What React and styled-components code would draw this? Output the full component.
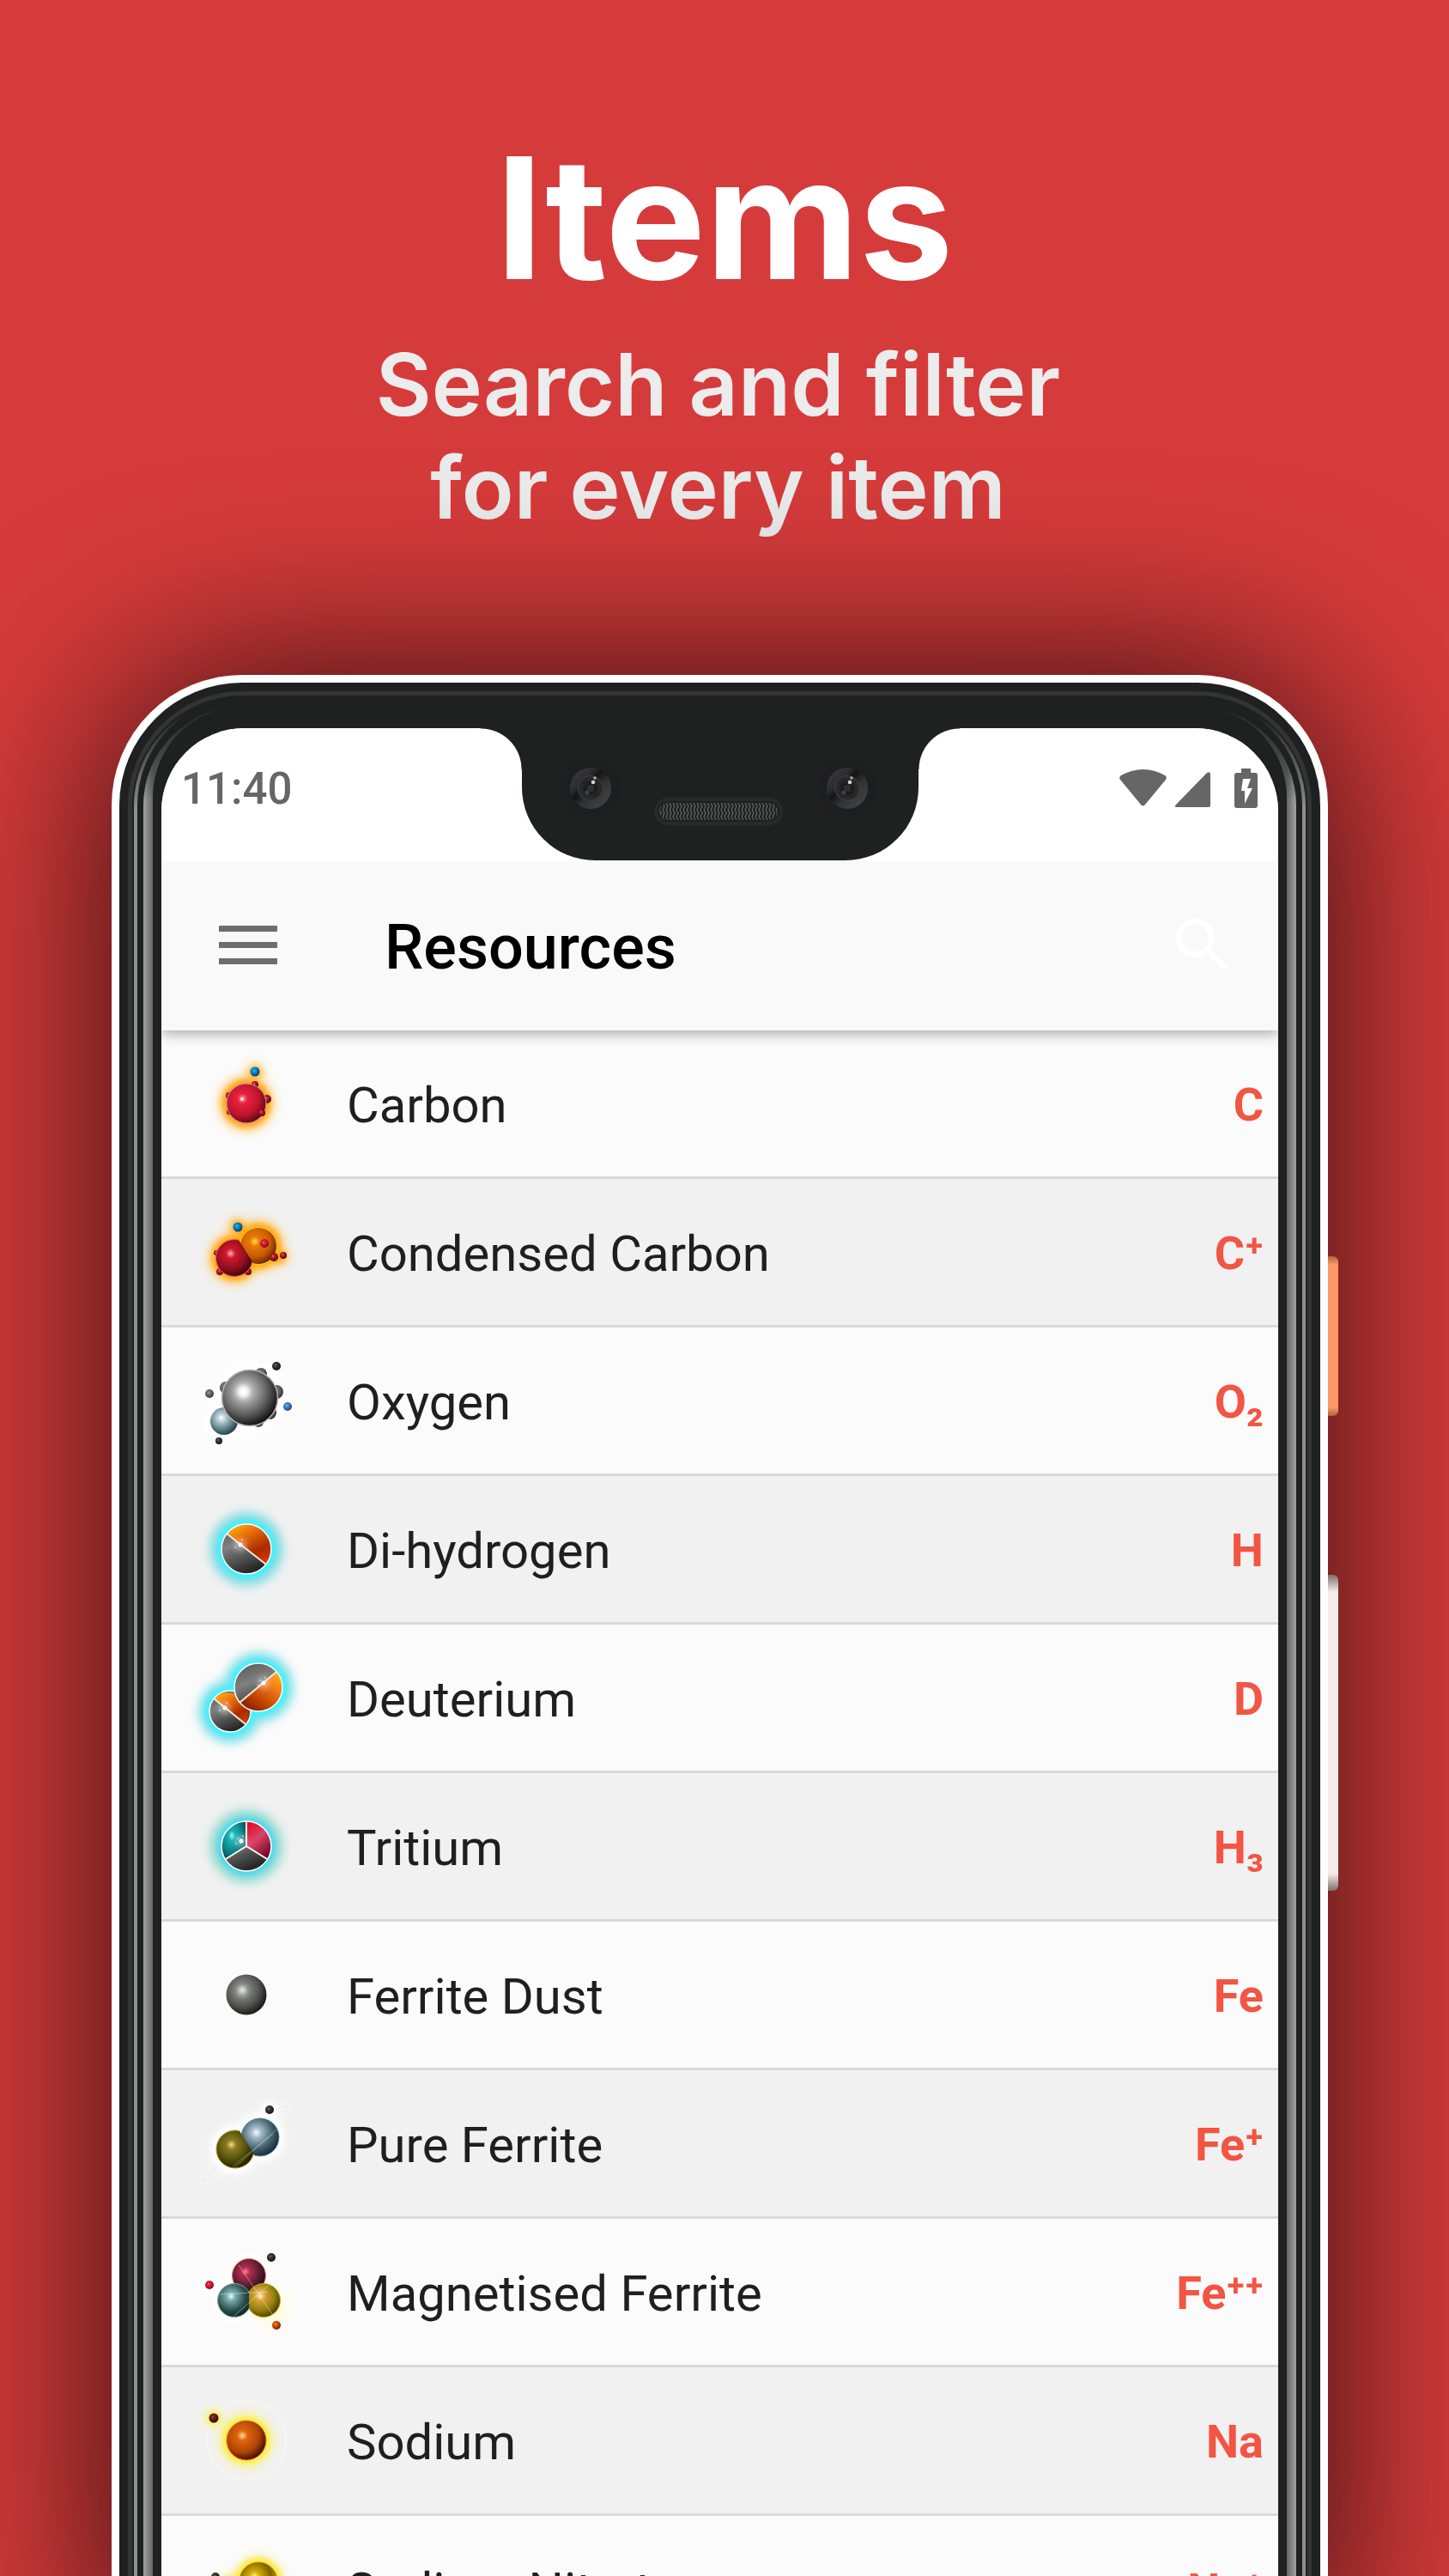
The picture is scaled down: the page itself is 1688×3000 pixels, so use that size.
import React from "react";
import styled, { createGlobalStyle } from "styled-components";

const GlobalStyle = createGlobalStyle`
  *, *::before, *::after { box-sizing: border-box; }
  body { margin: 0; background: #d63b3b; }
`;

const Page = styled.main`
  height: 100vh;
  overflow: hidden;
  background: #d63b3b;
  font-family: Roboto, "Noto Sans", sans-serif;
`;

const Title = styled.h1`
  margin: 0;
  padding-top: 134px;
  color: #fff;
  font: 700 196px/240px Inter, sans-serif;
  text-align: center;
`;

const Column = styled.div`
  margin: 0 141px 0 130px;
`;

const Subtitle = styled.p`
  margin: 0;
  padding: 14px 4px 158px 0;
  color: #ececec;
  font: 600 100px/120px Inter, sans-serif;
  text-align: center;
`;

const Phone = styled.section`
  position: relative;
  padding: 9px 9px 0;
  border-radius: 152px 152px 0 0;
  background: #fff;
  box-shadow: 0 0 220px rgba(0, 0, 0, 0.8);
`;

const SideKey = styled.span`
  position: absolute;
  left: 100%;
  top: ${(p) => p.$top}px;
  width: 12px;
  height: ${(p) => p.$height}px;
  border-radius: 0 6px 6px 0;
  background: linear-gradient(
    ${(p) => p.$edge},
    ${(p) => p.$color} ${(p) => p.$fade}px calc(100% - ${(p) => p.$fade}px),
    ${(p) => p.$edge}
  );
`;

const Shell = styled.div`
  padding: 10px 10px 0;
  border-radius: 143px 143px 0 0;
  background: #1f2120;
`;

const Ring = styled.div`
  padding: 5px 5px 0;
  border-radius: 133px 133px 0 0;
  background: #343434;
`;

const Rim = styled.div`
  padding: 2px 2px 0;
  border-radius: 128px 128px 0 0;
  background: #1f2120;
`;

const Glint = styled.div`
  padding: 0 4px;
  border-radius: 126px 126px 0 0;
  background: linear-gradient(#1f2120 20px, #8f8f8f 130px);
`;

const Band = styled.div`
  padding: 11px 7px 0;
  border-radius: 126px 126px 0 0;
  background: #1f2120;
`;

const Chrome = styled.div`
  padding: 0 11px;
  border-radius: 115px 115px 0 0;
  background:
    linear-gradient(#2e2e30 20px, transparent 110px),
    linear-gradient(90deg, #a2a2a2, #666 11px, #666 calc(100% - 11px), #a2a2a2);
`;

const Bezel = styled.div`
  padding: 25px 10px 0;
  border-radius: 105px 105px 0 0;
  background: #1f2120;
`;

const Screen = styled.div`
  overflow: hidden;
  border-radius: 97px 97px 0 0;
  background: #fff;
`;

const StatusBar = styled.div`
  position: relative;
  z-index: 1;
  display: grid;
  grid-template-columns: 1fr 462px 1fr;
  height: 155px;
  background: #fff;
  color: #666;
`;

const StatusSide = styled.div`
  display: flex;
  align-items: center;
  justify-content: ${(p) => (p.$end ? "flex-end" : "flex-start")};
  padding: 0 23px 13px;
`;

const Clock = styled.time`
  font-size: 51px;
  line-height: 60px;
  font-weight: 500;
`;

const Notch = styled.div`
  position: relative;
  display: flex;
  align-items: center;
  justify-content: space-between;
  height: 154px;
  padding: 0 49px 14px 46px;
  border-radius: 0 0 85px 85px;
  background: #1f2120;
  &::before, &::after {
    content: "";
    position: absolute;
    top: 0;
    width: 48px;
    height: 48px;
  }
  &::before {
    right: 100%;
    background: radial-gradient(circle at 0 100%, transparent 47px, #1f2120 48px);
  }
  &::after {
    left: 100%;
    background: radial-gradient(circle at 100% 100%, transparent 47px, #1f2120 48px);
  }
`;

const Speaker = styled.div`
  width: 150px;
  height: 32px;
  margin-top: 54px;
  padding: 6px;
  border-radius: 16px;
  background: #2a2a2a;
`;

const Toolbar = styled.header`
  position: relative;
  display: flex;
  align-items: center;
  height: 197px;
  padding: 0 46px 2px 67px;
  background: #f9f9f9;
  box-shadow: 0 2px 16px rgba(0, 0, 0, 0.4);
`;

const IconButton = styled.button`
  display: flex;
  padding: 0;
  border: 0;
  background: none;
`;

const ScreenTitle = styled.h2`
  flex: 1;
  margin: 0 0 0 125px;
  padding-top: 6px;
  color: #000;
  font-size: 72px;
  line-height: 84px;
  font-weight: 500;
`;

const List = styled.ul`
  margin: 0;
  padding: 0;
  list-style: none;
`;

const Row = styled.li`
  display: flex;
  align-items: center;
  height: 173px;
  padding: 4px 17px 0 36px;
  border-bottom: 3px solid #d9d9d9;
  background: #fbfbfb;
  &:nth-child(even) { background: #f1f1f1; }
`;

const Name = styled.span`
  flex: 1;
  margin-left: 54px;
  color: #1f1f1f;
  font-size: 58px;
  line-height: 68px;
`;

const Symbol = styled.span`
  color: #f25543;
  font-size: 54px;
  line-height: 64px;
  font-weight: 700;
`;

const Art = styled.svg`
  display: block;
  flex: none;
  overflow: visible;
`;

const Definitions = styled(Art)`
  position: absolute;
`;

const palette = {
  red: ["#ff9aa8", "#e8203f", "#c0142c", "#5a0814"],
  deepRed: ["#ffb0b8", "#d0182c", "#8c1020", "#38040a"],
  amber: ["#ffe040", "#e87c08", "#c85a00", "#602400"],
  blue: ["#40d8ff", "#0c98e0", "#0468a8", "#02304c"],
  softBlue: ["#9cc8f4", "#5090d0", "#3068a8", "#204060"],
  steel: ["#ffffff", "#b8b8b8", "#5c5c5c", "#0c0c0c"],
  stone: ["#d8dcd8", "#848884", "#505250", "#141614"],
  grey: ["#b0b0b0", "#787878", "#585858", "#2c2c2c"],
  dark: ["#888888", "#404040", "#262626", "#0a0a0a"],
  orange: ["#ffb040", "#e86404", "#b43400", "#601400"],
  glass: ["#ffffff", "#c0d4da", "#5c808a", "#203c46"],
  sky: ["#f4fcff", "#a4bcc8", "#42606e", "#142c34"],
  olive: ["#ffd880", "#8c7c20", "#4c4c08", "#1c1c00"],
  crimson: ["#ff7890", "#b42c50", "#581c34", "#280818"],
  teal: ["#e8ffff", "#7cacac", "#2c5050", "#0c2424"],
  gold: ["#ffe8a0", "#d8a030", "#948010", "#503800"],
  rust: ["#ffe090", "#e06410", "#b04408", "#3c0c00"],
  maroon: ["#b06040", "#782818", "#501408", "#280400"],
  sun: ["#fff8b0", "#d8b000", "#806000", "#c8a000"],
  cyan: ["#a0ffff", "#18b4b8", "#0c8488", "#084c50"],
};

const Gradients = () => (
  <Definitions width="0" height="0" aria-hidden="true">
    <defs>
      {Object.entries(palette).map(([name, c]) => (
        <radialGradient key={name} id={name} cx="0.4" cy="0.38" r="0.65">
          <stop offset="0" stopColor={c[0]} />
          <stop offset="0.2" stopColor={c[1]} />
          <stop offset="0.65" stopColor={c[2]} />
          <stop offset="1" stopColor={c[3]} />
        </radialGradient>
      ))}
      <linearGradient id="ember" x1="0.2" y1="0" x2="0.8" y2="1">
        <stop offset="0" stopColor="#ffb010" />
        <stop offset="0.3" stopColor="#e86c08" />
        <stop offset="0.7" stopColor="#a82c00" />
        <stop offset="1" stopColor="#e03800" />
      </linearGradient>
      <linearGradient id="emberLow" x1="1" y1="0" x2="0.2" y2="1">
        <stop offset="0" stopColor="#ffc010" />
        <stop offset="0.35" stopColor="#f07818" />
        <stop offset="0.7" stopColor="#c04400" />
        <stop offset="1" stopColor="#801800" />
      </linearGradient>
      <linearGradient id="ash" x1="0" y1="0" x2="0.4" y2="1">
        <stop offset="0" stopColor="#545454" />
        <stop offset="0.45" stopColor="#808080" />
        <stop offset="1" stopColor="#282828" />
      </linearGradient>
      <linearGradient id="ruby" x1="0.2" y1="0" x2="0.8" y2="1">
        <stop offset="0" stopColor="#e80828" />
        <stop offset="0.45" stopColor="#d84468" />
        <stop offset="1" stopColor="#700020" />
      </linearGradient>
      <linearGradient id="lens" x1="0" y1="0" x2="1" y2="1">
        <stop offset="0" stopColor="#3c3c3e" />
        <stop offset="0.3" stopColor="#2e2e30" />
        <stop offset="0.42" stopColor="#141414" />
        <stop offset="0.6" stopColor="#323234" />
        <stop offset="0.85" stopColor="#404042" />
        <stop offset="0.93" stopColor="#6c6c6c" />
        <stop offset="1" stopColor="#303030" />
      </linearGradient>
      <filter id="blur" x="-60%" y="-60%" width="220%" height="220%"><feGaussianBlur stdDeviation="6" /></filter>
      <filter id="tight" x="-60%" y="-60%" width="220%" height="220%"><feGaussianBlur stdDeviation="3" /></filter>
    </defs>
  </Definitions>
);

const Ball = ({ x, y, r, c, ...rest }) => <circle cx={x} cy={y} r={r} fill={`url(#${c})`} {...rest} />;

const Halo = ({ color, inner = color, spots, spread = 10 }) => (
  <>
    <g filter="url(#blur)" fill={color}>
      {spots.map(([x, y, r]) => <circle key={`${x}-${y}`} cx={x} cy={y} r={r + spread} />)}
    </g>
    <g filter="url(#tight)" fill={inner}>
      {spots.map(([x, y, r]) => <circle key={`${x}-${y}`} cx={x} cy={y} r={r + 4} />)}
    </g>
  </>
);

const Icon = ({ children }) => (
  <Art width="126" height="126" viewBox="0 0 126 126" aria-hidden="true">{children}</Art>
);

const Carbon = () => (
  <Icon>
    <Halo color="#ffd488" inner="#ffa010" spread={9} spots={[[63, 61, 24], [73, 25, 2]]} />
    <Ball x={73} y={39} r={4} c="deepRed" /><Ball x={87} y={56} r={5} c="deepRed" />
    <Ball x={43} y={52} r={4} c="deepRed" /><Ball x={43} y={71} r={3} c="deepRed" />
    <Ball x={63} y={61} r={23} c="red" stroke="#b898c0" strokeWidth="1" />
    <Ball x={81} y={72} r={4} c="deepRed" />
    <circle cx="58" cy="56" r="2" fill="#fff" opacity=".8" />
    <Ball x={73} y={24} r={5.5} c="blue" />
  </Icon>
);

const CondensedCarbon = () => (
  <Icon>
    <clipPath id="cc"><path d="M0 0H39V23L86 98V126H0Z" /></clipPath>
    <Halo color="#ffcc70" inner="#ffa810" spread={8} spots={[[49, 68, 22], [77, 54, 22], [53, 32, 3], [100, 66, 4]]} />
    <Ball x={28} y={62} r={3} c="deepRed" /><Ball x={32} y={84} r={4} c="deepRed" />
    <Ball x={65} y={84} r={4} c="deepRed" />
    <Ball x={77} y={54} r={21.5} c="amber" stroke="#ffd020" strokeWidth="1" />
    <Ball x={49} y={68} r={21.5} c="deepRed" stroke="#ff5060" strokeWidth="1" clipPath="url(#cc)" />
    <Ball x={84} y={51} r={5} c="red" /><Ball x={95} y={67} r={5} c="deepRed" />
    <Ball x={106} y={65} r={4} c="deepRed" /><Ball x={53} y={32} r={5.5} c="blue" />
  </Icon>
);

const Oxygen = () => (
  <Icon>
    <Halo color="#fff" spots={[[67, 58, 34], [37, 85, 15]]} />
    <Ball x={37} y={85} r={16} c="glass" />
    <Ball x={80} y={30} r={7} c="grey" /><Ball x={98} y={51} r={8} c="grey" />
    <Ball x={39} y={46} r={7} c="grey" /><Ball x={90} y={75} r={8} c="grey" />
    <Ball x={77} y={86} r={6} c="grey" />
    <Ball x={67} y={58} r={32.5} c="steel" stroke="#b4b4b4" strokeWidth="1.5" />
    <circle cx="59" cy="51" r="7" fill="#fff" filter="url(#tight)" />
    <Ball x={98} y={21} r={5} c="dark" /><Ball x={20} y={53} r={5} c="grey" />
    <Ball x={111} y={68} r={5} c="softBlue" /><Ball x={31} y={108} r={4} c="dark" />
  </Icon>
);

const Sparkle = ({ x, y }) => (
  <g fill="#fff">
    <circle cx={x} cy={y} r="7" opacity=".4" filter="url(#tight)" />
    <circle cx={x} cy={y} r="2.5" />
    <circle cx={x - 6} cy={y + 3} r="1" opacity=".6" /><circle cx={x + 2} cy={y - 6} r="1" opacity=".6" />
    <circle cx={x - 4} cy={y - 3} r="1" opacity=".6" />
  </g>
);

const DiHydrogen = () => (
  <Icon>
    <Halo color="#84dce2" inner="#38f4ff" spread={13} spots={[[63, 61, 30]]} />
    <circle cx="63" cy="61" r="29" fill="url(#ash)" />
    <path d="M40 43A29 29 0 0 1 86 79Z" fill="url(#ember)" />
    <path d="M40 43L86 79" stroke="#f8e8e0" strokeWidth="2" />
    <circle cx="63" cy="61" r="29" fill="none" stroke="#fff" strokeWidth="1.5" />
    <Sparkle x={56} y={56} />
  </Icon>
);

const Deuterium = () => (
  <Icon>
    <Halo color="#84e0e8" inner="#38f4ff" spread={12} spots={[[77, 49, 29], [44, 77, 25]]} />
    <circle cx="44" cy="77" r="24" fill="url(#ash)" />
    <path d="M25 62A24 24 0 0 1 62 92Z" fill="url(#ember)" />
    <path d="M25 62L62 92" stroke="#f8e8e0" strokeWidth="2" />
    <circle cx="44" cy="77" r="24" fill="none" stroke="#fff" strokeWidth="1.5" />
    <Sparkle x={38} y={73} />
    <circle cx="77" cy="49" r="28" fill="url(#ash)" />
    <path d="M98 31A28 28 0 0 1 55 67Z" fill="url(#emberLow)" />
    <path d="M98 31L55 67" stroke="#f8e8e0" strokeWidth="2" />
    <circle cx="77" cy="49" r="28" fill="none" stroke="#fff" strokeWidth="1.5" />
    <Sparkle x={83} y={44} />
  </Icon>
);

const Tritium = () => (
  <Icon>
    <Halo color="#94dcd0" inner="#48d8f0" spread={13} spots={[[63, 61, 30]]} />
    <circle cx="63" cy="61" r="29" fill="url(#ash)" />
    <path d="M63 61V32A29 29 0 0 0 39 76Z" fill="url(#cyan)" />
    <path d="M63 61V32A29 29 0 0 1 87 76Z" fill="url(#ruby)" />
    <path d="M63 32V61L39 76M63 61L87 76" fill="none" stroke="#fff" strokeWidth="2" />
    <circle cx="63" cy="61" r="29" fill="none" stroke="#fff" strokeWidth="1.5" />
    <Sparkle x={57} y={55} />
  </Icon>
);

const FerriteDust = () => (
  <Icon>
    <Ball x={63} y={61} r={23.5} c="stone" />
    <circle cx="58" cy="57" r="6" fill="#fff" opacity=".4" filter="url(#tight)" />
  </Icon>
);

const PureFerrite = () => (
  <Icon>
    <clipPath id="pf"><path d="M0 0H40V23L88 99V126H0Z" /></clipPath>
    <Halo color="#fafafa" inner="#fff" spread={6} spots={[[50, 68, 23], [79, 54, 23], [90, 22, 4]]} />
    <g fill="none" stroke="#fff" opacity=".7" transform="rotate(-41 62 61)">
      <ellipse cx="62" cy="61" rx="69" ry="13" /><ellipse cx="62" cy="61" rx="60" ry="9" />
    </g>
    <Ball x={79} y={54} r={22} c="sky" stroke="#4c88a0" strokeWidth="1" />
    <Ball x={50} y={68} r={22} c="olive" stroke="#c09020" strokeWidth="1" clipPath="url(#pf)" />
    <path d="M50 89L98 45M47 88L94 50" stroke="#fff" opacity=".35" />
    <Ball x={90} y={22} r={5} c="dark" />
  </Icon>
);

const MagnetisedFerrite = () => (
  <Icon>
    <clipPath id="mf"><path d="M0 0H66V126H0Z" /></clipPath>
    <circle cx="92" cy="80" r="22" fill="#ffffd0" opacity=".6" filter="url(#blur)" />
    <Halo color="#fff" spread={6} spots={[[66, 42, 19], [49, 71, 19], [20, 53, 4]]} />
    <Ball x={66} y={42} r={19.5} c="crimson" stroke="#e08850" strokeWidth="1" />
    <Ball x={83} y={71} r={19.5} c="gold" stroke="#c0b020" strokeWidth="1" />
    <Ball x={49} y={71} r={19.5} c="teal" stroke="#80b098" strokeWidth="1" clipPath="url(#mf)" />
    <path d="M54 30L94 88M32 64L88 61M48 90L88 54" stroke="#fff" opacity=".4" />
    <circle cx="79" cy="63" r="4" fill="#fff" opacity=".6" filter="url(#tight)" />
    <Ball x={92} y={21} r={5} c="dark" /><Ball x={20} y={53} r={5} c="red" />
    <Ball x={98} y={100} r={5} c="orange" />
  </Icon>
);

const Sodium = () => (
  <Icon>
    <circle cx="63" cy="61" r="46" fill="none" stroke="#f8f8ec" strokeWidth="1.5" />
    <Halo color="#f8f2b4" inner="#ffee40" spread={9} spots={[[63, 61, 24], [25, 35, 3]]} />
    <Ball x={63} y={61} r={23} c="rust" stroke="#f07010" strokeWidth="1" />
    <Ball x={25} y={35} r={5.5} c="maroon" />
  </Icon>
);

const SodiumNitrate = () => (
  <Icon>
    <Halo color="#f8f2b4" inner="#ffe830" spread={7} spots={[[77, 52, 23], [50, 72, 22]]} />
    <Ball x={50} y={72} r={22} c="rust" />
    <Ball x={77} y={52} r={22} c="sun" stroke="#b08c00" strokeWidth="1" />
    <Ball x={27} y={47} r={5} c="dark" />
  </Icon>
);

const resources = [
  ["Carbon", "C", Carbon],
  ["Condensed Carbon", "C⁺", CondensedCarbon],
  ["Oxygen", "O₂", Oxygen],
  ["Di-hydrogen", "H", DiHydrogen],
  ["Deuterium", "D", Deuterium],
  ["Tritium", "H₃", Tritium],
  ["Ferrite Dust", "Fe", FerriteDust],
  ["Pure Ferrite", "Fe⁺", PureFerrite],
  ["Magnetised Ferrite", "Fe⁺⁺", MagnetisedFerrite],
  ["Sodium", "Na", Sodium],
  ["Sodium Nitrate", "Na⁺", SodiumNitrate],
];

const Camera = () => (
  <Art width="68" height="68" viewBox="0 0 68 68" aria-hidden="true">
    <circle cx="34" cy="34" r="34" fill="#1b1f22" />
    <circle cx="34" cy="34" r="24" fill="url(#lens)" />
    <circle cx="34" cy="34" r="14.5" fill="#2e2e2f" stroke="#3c444c" strokeWidth="1" />
    <circle cx="34" cy="34" r="9" fill="#161616" filter="url(#tight)" />
    <circle cx="34" cy="34" r="4" fill="#303030" />
    <circle cx="39" cy="22" r="1.7" fill="#c0a4ac" />
    <circle cx="37" cy="27" r="2.3" fill="#c4d4dc" />
    <circle cx="30" cy="39" r="2.5" fill="#2c4a40" />
  </Art>
);

const Grille = () => (
  <Art width="138" height="20" viewBox="0 0 138 20" aria-hidden="true">
    <defs>
      <pattern id="mesh" width="4" height="8" patternUnits="userSpaceOnUse">
        <path d="M0 0L2 4L0 8M4 0L6 4L4 8" fill="none" stroke="#606060" strokeWidth="1.3" />
      </pattern>
    </defs>
    <rect x="-2" y="-2" width="142" height="24" rx="12" fill="#1f2120" />
    <rect width="138" height="20" rx="10" fill="url(#mesh)" />
  </Art>
);

const StatusIcons = () => (
  <Art width="162" height="48" viewBox="0 0 162 48" fill="#666" role="img" aria-label="Wi-Fi, signal, battery charging">
    <path d="M1 13Q-1 10 2 8Q28 -6 53 8Q56 10 54 13L30 42Q27.500 45 25 42Z" />
    <path d="M106 7V43Q106 45 104 45H67Q63 45 66 42L102 5Q106 3 106 7Z" />
    <path fillRule="evenodd" d="M142 0H153V5H158Q161 5 161 8V43Q161 46 158 46H137Q134 46 134 43V8Q134 5 137 5H142ZM144 12L142 26H146V41L155 23H149L153 12Z" />
  </Art>
);

export default function App() {
  return (
    <Page>
      <GlobalStyle />
      <Gradients />
      <Title>Items</Title>
      <Column>
        <Subtitle>Search and filter<br />for every item</Subtitle>
        <Phone>
          <SideKey $top={677} $height={186} $fade={10} $color="#ff9768" $edge="#b06038" />
          <SideKey $top={1048} $height={368} $fade={20} $color="#f5ebe9" $edge="#7c706c" />
          <Shell><Ring><Rim><Glint><Band><Chrome><Bezel>
            <Screen>
              <StatusBar>
                <StatusSide><Clock>11:40</Clock></StatusSide>
                <Notch><Camera /><Speaker><Grille /></Speaker><Camera /></Notch>
                <StatusSide $end><StatusIcons /></StatusSide>
              </StatusBar>
              <Toolbar>
                <IconButton aria-label="Menu">
                  <Art width="68" height="46" viewBox="0 0 68 46" fill="#6a6e72">
                    <path d="M0 0H68V7H0ZM0 19H68V26H0ZM0 38H68V45H0Z" />
                  </Art>
                </IconButton>
                <ScreenTitle>Resources</ScreenTitle>
                <IconButton aria-label="Search">
                  <Art width="84" height="84" viewBox="0 0 24 24" fill="#fff">
                    <path d="M15.500 14h-.79l-.28-.27A6.470 6.470 0 0 0 16 9.500 6.500 6.500 0 1 0 9.500 16c1.610 0 3.090-.59 4.230-1.570l.27.28v.79l5 4.990L20.490 19l-4.990-5zm-6 0C7.010 14 5 11.990 5 9.500S7.010 5 9.500 5 14 7.010 14 9.500 11.990 14 9.500 14z" />
                  </Art>
                </IconButton>
              </Toolbar>
              <List>
                {resources.map(([name, symbol, Picture]) => (
                  <Row key={name}>
                    <Picture />
                    <Name>{name}</Name>
                    <Symbol>{symbol}</Symbol>
                  </Row>
                ))}
              </List>
            </Screen>
          </Bezel></Chrome></Band></Glint></Rim></Ring></Shell>
        </Phone>
      </Column>
    </Page>
  );
}
